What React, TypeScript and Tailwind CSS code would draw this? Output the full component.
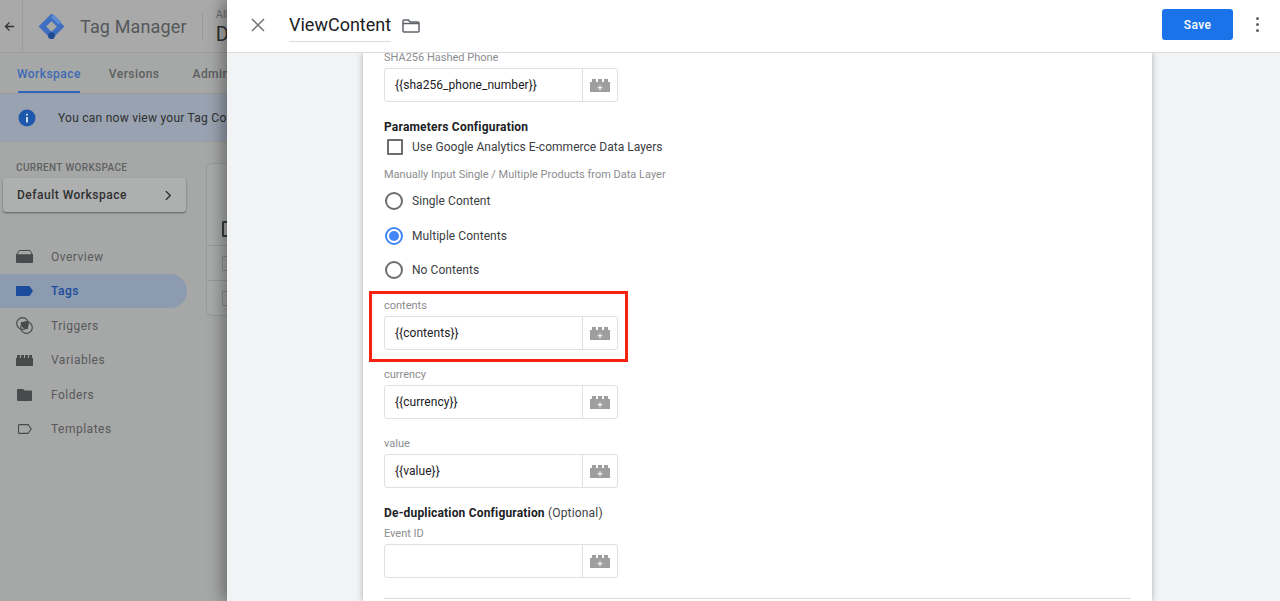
import React from "react";

const VariableIcon = ({ className = "" }: { className?: string }) => (
  <svg viewBox="0 0 20 13" className={className} fill="currentColor">
    <path d="M0 3h2V0h4v3h2V0h4v3h2V0h4v3h2v10H0z" />
    <path d="M9.500 6.200h1v2h2v1h-2v2h-1v-2h-2v-1h2z" fill="#fff" />
  </svg>
);

const Field = ({ label, value, className = "" }: { label: string; value: string; className?: string }) => (
  <div className={className}>
    <div className="pt-[1px] text-[11px] leading-[15px] text-[#8b8d8f] mb-[3px]">{label}</div>
    <div className="flex w-[234px] h-[34px] rounded-[3px] border border-[#e0e0e0] bg-white">
      <div className="w-[198px] border-r border-[#e0e0e0] pl-[10px] text-[12px] leading-[33px] tracking-[0.05px] text-[#202124]">
        {value}
      </div>
      <div className="flex flex-1 items-center justify-center">
        <VariableIcon className="w-5 h-[13px] text-[#9e9e9e]" />
      </div>
    </div>
  </div>
);

const Radio = ({ label, checked }: { label: string; checked?: boolean }) => (
  <div className="flex h-[34.5px] items-center">
    <div
      className={
        checked
          ? "ml-[1px] flex h-[18px] w-[18px] items-center justify-center rounded-full border-2 border-[#4285f4]"
          : "ml-[1px] h-[18px] w-[18px] rounded-full border-2 border-[#6b6d70]"
      }
    >
      {checked && <div className="h-[10px] w-[10px] rounded-full bg-[#4285f4]" />}
    </div>
    <span className="ml-[9px] text-[12px] tracking-[0.05px] text-[#3c4043]">{label}</span>
  </div>
);

const navItems = [
  {
    label: "Overview",
    icon: (
      <svg viewBox="0 0 17 13" className="h-[13px] w-[17px]" fill="currentColor">
        <path d="M3 .5h11l2.500 4.500H.5z" fill="none" stroke="currentColor" />
        <path d="M0 4.500h17V12a1 1 0 0 1-1 1H1a1 1 0 0 1-1-1z" />
      </svg>
    ),
  },
  {
    label: "Tags",
    active: true,
    icon: (
      <svg viewBox="0 0 17 10" className="h-[10px] w-[17px]" fill="currentColor">
        <path d="M0 0h13.500L17 5l-3.500 5H0z" />
      </svg>
    ),
  },
  {
    label: "Triggers",
    icon: (
      <svg viewBox="0 0 17 17" className="h-[17px] w-[17px]" fill="none" stroke="currentColor" strokeWidth="1.2">
        <circle cx="6.500" cy="6.500" r="5.800" />
        <circle cx="10.500" cy="10.500" r="5.800" />
        <path d="M5 5h7v7a6 6 0 0 1-7-7z" fill="currentColor" stroke="none" />
      </svg>
    ),
  },
  {
    label: "Variables",
    icon: (
      <svg viewBox="0 0 17 11" className="h-[11px] w-[17px]" fill="currentColor">
        <path d="M0 3h1V0h3v3h1V0h3v3h1V0h3v3h1V0h3v3h1v8H0z" />
      </svg>
    ),
  },
  {
    label: "Folders",
    icon: (
      <svg viewBox="0 0 15 12" className="h-[12px] w-[15px]" fill="currentColor">
        <path d="M0 1a1 1 0 0 1 1-1h5l1.500 1.500H14a1 1 0 0 1 1 1V11a1 1 0 0 1-1 1H1a1 1 0 0 1-1-1z" />
      </svg>
    ),
  },
  {
    label: "Templates",
    icon: (
      <svg viewBox="0 0 14 10" className="h-[10px] w-[14px]" fill="none" stroke="currentColor" strokeWidth="1.1">
        <path d="M1.500.6h8.600L13.200 5l-3.100 4.400H1.500a1 1 0 0 1-1-1V1.600a1 1 0 0 1 1-1z" />
      </svg>
    ),
  },
];

export default function App() {
  return (
    <div className="flex h-[601px] w-[1280px] overflow-hidden font-['Roboto',sans-serif]">
      {/* Dimmed page behind the drawer */}
      <div className="flex w-[227px] flex-none flex-col overflow-hidden bg-[#a6a7a7]">
        <div className="flex h-[53px] flex-none items-center border-b border-[#9a9b9b] bg-[#a9a9a9]">
          <div className="flex h-full w-[23px] flex-none items-center justify-center border-r border-[#9a9b9b] pr-[4px]">
            <svg viewBox="0 0 12 12" className="h-[11px] w-[11px]" fill="none" stroke="#2f3030" strokeWidth="1.4">
              <path d="M11 6H1.500M6 1.500 1.500 6 6 10.500" />
            </svg>
          </div>
          <svg viewBox="0 0 28 28" className="ml-[15px] h-[27px] w-[27px] flex-none">
            <path d="M14 2 26 14 14 26 2 14z" fill="#3f6fc0" stroke="#3f6fc0" strokeWidth="2" strokeLinejoin="round" />
            <path d="M14 8.500 19.500 14 14 19.500 8.500 14z" fill="#a9a9a9" />
            <path d="M16.500 1.500 24 9l-2.800 2.800-7.500-7.500z" fill="#5f8bd3" />
            <circle cx="14" cy="23.500" r="3.500" fill="#1f4a94" />
          </svg>
          <span className="ml-[15px] text-[18px] tracking-[0.15px] whitespace-nowrap text-[#55585a]">Tag Manager</span>
          <div className="ml-[15px] h-[28px] w-px flex-none bg-[#989999]" />
          <div className="ml-[13px] flex flex-col">
            <span className="text-[11px] leading-[13px] text-[#6d6e6f]">All</span>
            <span className="mt-[3px] text-[20px] leading-[20px] text-[#2f3030]">D</span>
          </div>
        </div>

        <div className="flex h-[41px] flex-none items-center gap-[28px] border-b border-[#9a9b9b] pt-[1px] pl-[17px] text-[12px] tracking-[0.45px] font-medium text-[#5d5f60]">
          <span className="relative flex h-full items-center text-[#3d6ab5]">
            Workspace
            <span className="absolute inset-x-[1px] bottom-0 h-[2px] bg-[#2f66bd]" />
          </span>
          <span>Versions</span>
          <span className="ml-[5px]">Admin</span>
        </div>

        <div className="flex h-[48px] flex-none items-center border-b border-[#9d9e9f] bg-[#99a2b0] pl-[18px] text-[12px] tracking-[0.25px] whitespace-nowrap text-[#2e3030]">
          <svg viewBox="0 0 18 18" className="h-[18px] w-[18px] flex-none">
            <circle cx="9" cy="9" r="8.500" fill="#1e58ad" />
            <path d="M8.100 8h1.800v5.500H8.100zM8.100 4.700h1.800v1.800H8.100z" fill="#dfe6f0" />
          </svg>
          <span className="ml-[22px]">You can now view your Tag Coverage</span>
        </div>

        <div className="flex flex-1">
          <div className="w-[187px] flex-none">
            <div className="mt-[20px] pl-[16px] text-[10px] leading-3 tracking-[0.35px] font-medium text-[#5f6162]">
              CURRENT WORKSPACE
            </div>
            <div className="mt-[4px] ml-[3px] flex h-[34px] w-[183px] items-center justify-between rounded-[3px] bg-[#aeafaf] pr-[14px] pl-[14px] shadow-[0_1px_2px_rgba(0,0,0,0.45)]">
              <span className="text-[12px] tracking-[0.5px] font-medium text-[#2f3030]">Default Workspace</span>
              <svg viewBox="0 0 8 12" className="h-[11px] w-[7px]" fill="none" stroke="#2b2c2c" strokeWidth="1.600">
                <path d="M1 1l5 5-5 5" />
              </svg>
            </div>
            <div className="mt-[27px]">
              {navItems.map((item) => (
                <div
                  key={item.label}
                  className={
                    item.active
                      ? "flex h-[34.5px] items-center rounded-r-full bg-[#8d9bb0] pt-[1px] text-[#1c4c9c]"
                      : "flex h-[34.5px] items-center pt-[1px] text-[#484a4c]"
                  }
                >
                  <div className="flex w-[51px] flex-none justify-center pr-[2px]">{item.icon}</div>
                  <span className={item.active ? "text-[12px] tracking-[0.5px] font-medium" : "text-[12px] tracking-[0.5px] text-[#58595b]"}>
                    {item.label}
                  </span>
                </div>
              ))}
            </div>
          </div>
          <div className="mt-[21px] ml-[19px] h-[153px] w-[40px] flex-none rounded-l-[6px] border border-r-0 border-[#999a9a] bg-[#a9aaaa]">
            <div className="h-[82px] border-b border-[#979898] pt-[57px] pl-[15px]">
              <div className="h-[16px] w-[6px] rounded-l-[2px] border-2 border-r-0 border-[#3a3b3b]" />
            </div>
            <div className="h-[35px] border-b border-[#979898] pt-[10px] pl-[15px]">
              <div className="h-[15px] w-[5px] rounded-l-[2px] border border-r-0 border-[#8a8b8b]" />
            </div>
            <div className="pt-[10px] pl-[15px]">
              <div className="h-[15px] w-[5px] rounded-l-[2px] border border-r-0 border-[#8a8b8b]" />
            </div>
          </div>
        </div>
      </div>

      {/* Tag editor drawer */}
      <div className="relative flex flex-1 flex-col bg-[#f1f3f4] shadow-[-5px_0_14px_rgba(0,0,0,0.35)]">
        <div className="flex h-[53px] flex-none items-center border-b border-[#dadce0] bg-white">
          <svg viewBox="0 0 14 14" className="mb-[2px] ml-[24px] h-[14px] w-[14px]" fill="none" stroke="#6f7173" strokeWidth="1.500">
            <path d="M1 1l12 12M13 1 1 13" />
          </svg>
          <span className="ml-[24px] border-b border-[#dadce0] pt-[1px] pb-[4px] text-[18px] leading-[25px] text-[#202124]">
            ViewContent
          </span>
          <svg viewBox="0 0 18 14" className="ml-[11px] h-[14px] w-[18px]" fill="none" stroke="#5f6368" strokeWidth="1.500">
            <path d="M1 2a1 1 0 0 1 1-1h4.500l1.500 2h8a1 1 0 0 1 1 1v8a1 1 0 0 1-1 1H2a1 1 0 0 1-1-1z" />
            <path d="M1 4.500h16" />
          </svg>
          <button className="mb-[3px] ml-auto h-[31px] w-[71px] rounded-[3px] bg-[#1a73e8] text-[12px] tracking-[0.4px] font-medium text-white">
            Save
          </button>
          <div className="mr-[21px] mb-[3px] ml-[23px] flex flex-col gap-[3px]">
            <span className="h-[3px] w-[3px] rounded-full bg-[#5f6368]" />
            <span className="h-[3px] w-[3px] rounded-full bg-[#5f6368]" />
            <span className="h-[3px] w-[3px] rounded-full bg-[#5f6368]" />
          </div>
        </div>

        <div className="flex-1 overflow-hidden pl-[136px]">
          <div className="flow-root h-full w-[789px] overflow-hidden bg-white pr-[21px] pl-[21px] shadow-[0_0_6px_rgba(0,0,0,0.3)]">
            <div className="-mt-[4px]">
              <Field label="SHA256 Hashed Phone" value="{{sha256_phone_number}}" />
              <div className="mt-[14px] pt-[2px] text-[12px] leading-[18px] tracking-[0.2px] font-bold text-[#202124]">Parameters Configuration</div>
              <div className="flex h-5 items-center pt-[1px]">
                <div className="ml-[3px] h-4 w-4 rounded-[1px] border-2 border-[#6b6d70]" />
                <span className="ml-[9px] text-[12px] tracking-[0.03px] text-[#3c4043]">
                  Use Google Analytics E-commerce Data Layers
                </span>
              </div>
              <div className="mt-[10px] pt-[1px] text-[11px] leading-[15px] text-[#8b8d8f]">
                Manually Input Single / Multiple Products from Data Layer
              </div>
              <div className="mt-[2px]">
                <Radio label="Single Content" />
                <Radio label="Multiple Contents" checked />
                <Radio label="No Contents" />
              </div>
              <div className="relative mt-[9.500px]">
                <Field label="contents" value="{{contents}}" />
                <div className="absolute -top-[6px] -left-[15px] h-[71px] w-[259px] border-[3px] border-[#f5220f]" />
              </div>
              <Field className="mt-4" label="currency" value="{{currency}}" />
              <Field className="mt-4" label="value" value="{{value}}" />
              <div className="mt-[15px] pt-[1px] text-[12px] leading-[19px] tracking-[0.18px] text-[#3c4043]">
                <span className="font-bold text-[#202124]">De-duplication Configuration</span> (Optional)
              </div>
              <Field className="mt-[2px]" label="Event ID" value="" />
              <div className="mt-[20px] h-px bg-[#dadce0]" />
            </div>
          </div>
        </div>
      </div>
    </div>
  );
}
